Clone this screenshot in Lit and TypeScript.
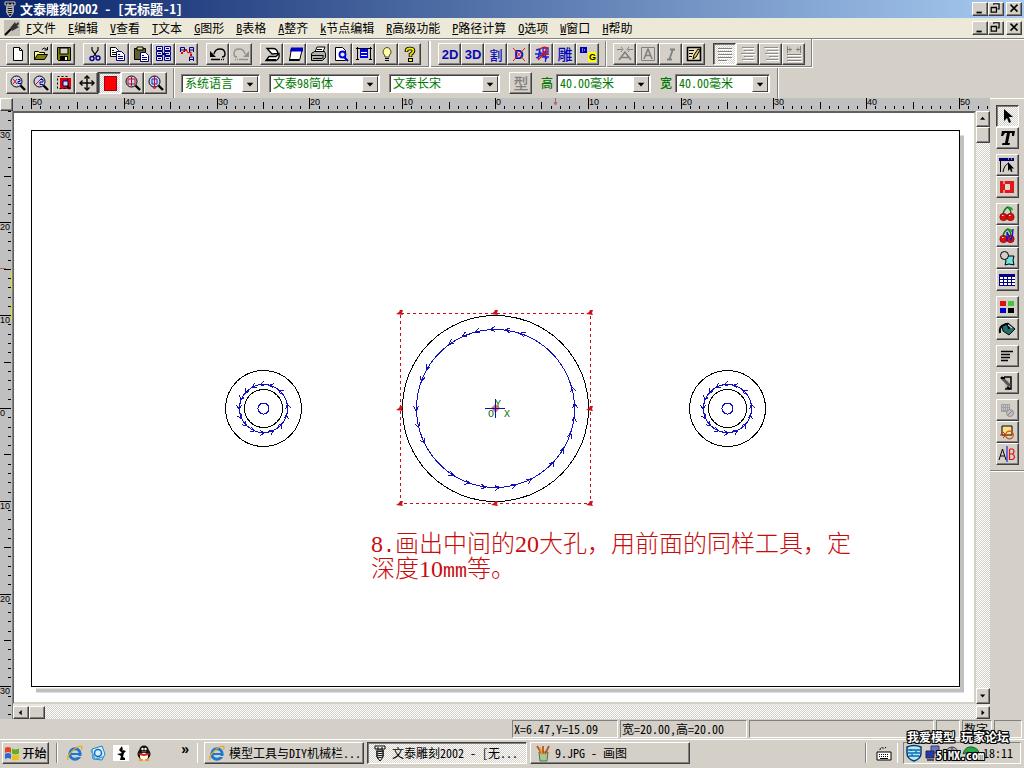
import { LitElement, html, svg, css, TemplateResult, SVGTemplateResult } from "lit";
import { customElement, property, state } from "lit/decorators.js";
import { classMap } from "lit/directives/class-map.js";

const doc = (x: number, y: number, c = "#000080") => svg`
  <path d="M${x}.5 ${y}.5h5l3 3v6h-8z" fill="#fff" stroke=${c} />
  <path d="M${x + 2} ${y + 3}.5h2M${x + 2} ${y + 5}.5h5M${x + 2} ${y + 7}.5h5" stroke=${c} />`;

const lens = (inner: SVGTemplateResult) => svg`
  <circle cx="6.5" cy="6.5" r="5.5" fill="#c8d8e8" stroke="#000" />
  <path d="M10.5 10.5l4.5 4.5" stroke="#000" stroke-width="2.4" />${inner}`;

const lines = (rows: number[][], c: string) =>
  rows.map(([x, y, w]) => svg`<rect x=${x} y=${y} width=${w} height="1" fill=${c} /><rect x=${x + 1} y=${y + 1} width=${w} height="1" fill="#fff" />`);

const glyph = (t: string, c: string, size = 15) =>
  svg`<text x="8" y="14" text-anchor="middle" font-size=${size} font-weight="500" fill=${c}>${t}</text>`;
const latin = (t: string, c: string) =>
  svg`<text class="latin" x="8" y="13" text-anchor="middle" font-size="13" font-weight="700" fill=${c}>${t}</text>`;

const cherries = svg`
  <path d="M4 8Q5 3 9 1Q12 4 12 8" fill="none" stroke="#087808" stroke-width="1.5" />
  <path d="M9 1q4-1 5 3q-3 1-5-3z" fill="#20a030" />
  <circle cx="4.5" cy="11" r="3.7" fill="#d81010" stroke="#700" stroke-width=".6" />
  <circle cx="11.5" cy="11" r="3.7" fill="#d81010" stroke="#700" stroke-width=".6" />
  <path d="M3 9.5h1.5M10 9.5h1.5" stroke="#fff" />`;

const ie = svg`
  <circle cx="8" cy="9" r="5.2" fill="none" stroke="#1c78d0" stroke-width="3" />
  <path d="M4 9h9" stroke="#1c78d0" stroke-width="2" />
  <path d="M10 11h5v1h-5z" fill="#d4d0c8" />
  <path d="M1 15C-1 11 7 3 12 1.5c3-1 3.500 1 2.500 3" fill="none" stroke="#e8a818" stroke-width="1.300" />`;

const screw = (a: string, b: string) => svg`
  <path d="M3 1h10v3H3zM5 5h6v7l-3 4-3-4z" fill=${a} stroke=${b} />
  <path d="M6 2v2M10 2v2M4 7l8-1M4 9l8-1M4 11l8-1M5 13l6-1" stroke=${b} fill="none" />`;

const icons: Record<string, unknown> = {
  new: svg`<path d="M3.5 1.500h6l3 3v10h-9z" fill="#fff" stroke="#000" /><path d="M9.500 1.500v3h3" fill="none" stroke="#000" />`,
  open: svg`<path d="M1.500 13.500v-8h4l1 1h5v3" fill="#ffff80" stroke="#000" /><path d="M1.500 13.500l3-5h10l-3 5z" fill="#808000" stroke="#000" /><path d="M9 3.500q2-3 5 0M14.500 1v3h-3" fill="none" stroke="#000" />`,
  save: svg`<path d="M1.500 1.500h13v13h-12l-1-1z" fill="#808000" stroke="#000" /><path d="M4 2h8v6H4z" fill="#d4d0c8" stroke="#000" /><path d="M4 10h8v5H4z" fill="#000" /><path d="M9 11h2v3H9z" fill="#fff" />`,
  cut: svg`<path d="M5 1v3l5 7M11 1v3l-5 7" fill="none" stroke="#000" stroke-width="1.200" /><circle cx="5" cy="12.500" r="2" fill="none" stroke="#000090" stroke-width="1.400" /><circle cx="11" cy="12" r="2" fill="none" stroke="#000090" stroke-width="1.400" />`,
  copy: svg`${doc(0, 1, "#000")}${doc(6, 5)}`,
  paste: svg`<path d="M1.500 2.500h11v11h-11z" fill="#606030" stroke="#000" /><path d="M4 1h6v3H4z" fill="#d8d890" stroke="#000" />${doc(7, 6)}`,
  grid: svg`${[0, 8].map((x) => [0, 5, 10].map((y) => svg`<path d="M${x}.5 ${y}.5h6v4h-6z" fill="#dfe4ff" stroke="#000080" /><path d="M${x + 2} ${y + 2}.5h3" stroke="#000080" />`))}<path d="M6 8h4" stroke="#000080" stroke-width="2" />`,
  nodes: svg`<path d="M1.500 6V1.500h4V6M1 4h5M10.500 6V1.500h4V6M10 4h5M10.500 15v-4h4v4M10 13.500h5" fill="none" stroke="#000090" /><path d="M3 7l4-4 2 4 3-1v4" fill="none" stroke="#e00000" /><path d="M2 6h2v2H2zM6 3h2v2H6zM11 8h2v2h-2z" fill="#e00000" />`,
  undo: svg`<path d="M4 8q1-5 6-5t5 5q0 3-3 3" fill="none" stroke="#000" stroke-width="1.400" /><path d="M0 5v6h6z" fill="#000" /><path d="M1 13.500h9M11 13.500h1M13 13.500h1" stroke="#000" stroke-width="1.500" />`,
  redo: svg`<path d="M12 8q-1-5-6-5t-5 5q0 3 3 3" fill="none" stroke="#909090" stroke-width="1.400" /><path d="M16 5v6h-6z" fill="#909090" /><path d="M6 13.500h9M4 13.500h1M2 13.500h1" stroke="#909090" stroke-width="1.500" />`,
  plot: svg`<path d="M3 2.500h6q4 0 5 5l-6 .5zM2 14.500l3-4h7l3-3q1 5-3 7z" fill="#fff" stroke="#000" stroke-width="1.300" /><path d="M2 14h10" stroke="#000" stroke-width="2" />`,
  sheet: svg`<path d="M4.500 2.500h11l-3 12h-10z" fill="#fff" stroke="#000" /><path d="M4 1.500h12v4H3z" fill="#0000c0" /><path d="M2 14h10" stroke="#000" stroke-width="2" />`,
  print: svg`<path d="M5 6l2-5h8l-2 5" fill="#fff" stroke="#000" /><path d="M1.500 7.500l3-2h10l1 2v4l-3 3h-11z" fill="#b0b0a8" stroke="#000" /><path d="M1 9.500h12M3 12.500h9M7 3.500h5M13 9v4" stroke="#000" />`,
  preview: svg`<path d="M2.500 1.500h7l3 3v10h-10z" fill="#fff" stroke="#000" /><circle cx="9.500" cy="8.500" r="3" fill="#e0e8ff" stroke="#0000d0" stroke-width="1.800" /><path d="M11 11l4 4" stroke="#0000d0" stroke-width="2" />`,
  frame: svg`<path d="M0 2.500h16M1.500 1v13M14.500 1v13M0 13.500h3M13 13.500h3" stroke="#000" /><path d="M4 3h8v9H4z" fill="#0000e0" /><path d="M5 6.500h6M5 9.500h6" stroke="#fff" />`,
  bulb: svg`<path d="M6 11q0-2-2-4 0-5 4-5.500 4 .5 4 5.500-2 2-2 4z" fill="#ffffa0" stroke="#444" /><path d="M6 12.500h4M6 14.500h4" stroke="#000" /><path d="M1 2l2 1M15 2l-2 1" stroke="#e0e000" />`,
  help: svg`<path d="M4.500 6V4.500q0-2 3.500-2t3.500 2-3 4V11" fill="none" stroke="#000" stroke-width="3.600" /><path d="M4.500 5.500V4.500q0-2 3.500-2t3.500 2-3 4V10.500" fill="none" stroke="#f0e800" stroke-width="1.800" /><rect x="6.500" y="12.500" width="4" height="3" fill="#f0e800" stroke="#000" />`,
  "2d": latin("2D", "#0808b8"),
  "3d": latin("3D", "#0808b8"),
  split: glyph("割", "#0808b8", 13),
  dx: svg`${latin("D", "#0808b8")}<path d="M2 2l12 13M14 2L2 15" stroke="#e02020" />`,
  weld: svg`<path d="M2 4l4-1-2 10M1 8h6M2 12l6-3M9 2h5v4H9zM8 8h7M8 11h7M11.500 7v9M5 5l8 8" fill="none" stroke="#2020d0" stroke-width="1.300" /><path d="M6 3q4-3 7-1-1 4-5 6M4 14l5-5 5-1" fill="none" stroke="#e01010" stroke-width="1.300" />`,
  carve: glyph("雕", "#0808b8"),
  bg: svg`<rect x="8" y="6" width="8" height="10" fill="#ffff00" /><path d="M0 1h7v6H0z" fill="#0000b0" /><path d="M2 3h1M4 4h1M2 5h1" stroke="#fff" /><text class="latin" x="9" y="14" font-size="9" font-weight="700">G</text>`,
  spread: svg`<path d="M2 14L8 6l6 8M4 11.500h8" fill="none" stroke="#808080" stroke-width="1.600" /><path d="M0 3.500h5M11 3.500h5M4 1l2 2.500L4 6M12 1l-2 2.500L12 6" fill="none" stroke="#808080" />`,
  boxa: svg`<path d="M1.500 1.500h13v13h-13z" fill="none" stroke="#808080" /><path d="M4 13L8 3l4 10M5.500 9.500h5" fill="none" stroke="#808080" stroke-width="1.600" />`,
  italic: svg`<path d="M7 3.500h5M4 13.500h5M10 3L6.500 13" fill="none" stroke="#808080" stroke-width="1.800" />`,
  edit: svg`<path d="M1.500 1.500h13v13h-13z" fill="#e8e0c0" stroke="#000" stroke-width="1.600" /><path d="M3 4.500h5M3 7.500h4M3 10.500h3" stroke="#000" /><path d="M7 13l1-4 4-6 2 1-4 7z" fill="#e8c858" stroke="#000" />`,
  left: svg`${lines([[1, 2, 14], [1, 5, 14], [1, 8, 14], [1, 11, 14], [1, 14, 9]], "#808080")}`,
  center: svg`${lines([[2, 1, 12], [4, 4, 9], [1, 7, 14], [4, 10, 9], [2, 13, 12]], "#909090")}`,
  right: svg`${lines([[1, 1, 14], [4, 4, 11], [2, 7, 13], [6, 10, 9], [3, 13, 12]], "#909090")}`,
  justify: svg`<path d="M1.500 0v7M14.500 0v7M2 3.500h4M10 3.500h4M4 1.500v4M12 1.500v4" stroke="#808080" />${lines([[1, 8, 14], [1, 11, 14], [1, 14, 14]], "#808080")}`,
  zoomx: lens(svg`<path d="M3 4l4 5M7 4L3 9" stroke="#e00000" /><path d="M8 4.500h2v2H8v2h3" fill="none" stroke="#0000c0" />`),
  zoomp: lens(svg`<path d="M2 10L9 3" stroke="#e00000" /><path d="M7 4.500h3v2.500H7V9.500h3" fill="none" stroke="#0000c0" />`),
  zoombox: svg`<path d="M4 3h11v11H4z" fill="#e00000" /><path d="M1.500 1.500h10v12h-10z" fill="none" stroke="#000" stroke-dasharray="2 2" /><path d="M7 6h5v5H7z" fill="#c8e0ff" stroke="#000080" /><path d="M11 11l3 3" stroke="#000" stroke-width="2" />`,
  move: svg`<path d="M8 1v14M1 8h14" stroke="#000" stroke-width="1.400" /><path d="M5.500 3.500L8 1l2.500 2.500M5.500 12.500L8 15l2.500-2.500M3.500 5.500L1 8l2.500 2.500M12.500 5.500L15 8l-2.500 2.500" fill="none" stroke="#000" stroke-width="1.400" />`,
  stop: svg`<rect x="2.500" y="1.500" width="12" height="14" fill="#f00" stroke="#a00020" />`,
  zoomall: lens(svg`<path d="M3 4h7v5H3zM6.500 2v9" fill="none" stroke="#d00030" />`),
  zoomone: lens(svg`<path d="M4 4h5v5H4z" fill="none" stroke="#2020e0" /><path d="M6.500 1v11M4 11l2.500 3L9 11" fill="none" stroke="#d00030" />`),
  type: glyph("型", "#808080"),
  arrow: svg`<path d="M5 1v12l3-3 2 5 2-1-2-5h4z" fill="#000" />`,
  text: svg`<path d="M3 1h13l-1 5h-2l0-3h-2L9 13h2l-.5 2H3l.5-2H6L8 3H6L4 6H2z" fill="#000" />`,
  node: svg`<path d="M0 1h15v3H0z" fill="#000070" /><path d="M12 2h1M9 2h1" stroke="#fff" /><path d="M1.500 4v11M4 15q1-7 6-9" fill="none" stroke="#000" /><path d="M9 5v9l2-2 1 3 1.500-.5-1-3H15z" fill="#000" />`,
  shape: svg`<path d="M1 2h14v12H1z" fill="#e01818" /><path d="M6 5h5v6H6z" fill="#e4d8d0" /><path d="M5 2v3M5 11v3" stroke="#fff" />`,
  cherry: cherries,
  cherryn: svg`${cherries}<path d="M8 13V4l4 8q2-5 2-11" fill="none" stroke="#1010d0" stroke-width="1.300" />`,
  merge: svg`<path d="M5 6h10l-1 4 1 5-5-1-4 1 1-4z" fill="#70e0e0" stroke="#000" /><circle cx="5.500" cy="5.500" r="4" fill="#d4d0c8" stroke="#000" />`,
  table: svg`<path d="M0 2h16v12H0z" fill="#000080" />${[0, 1, 2].map((r) => [0, 1, 2, 3].map((c) => svg`<rect x=${1 + c * 4} y=${5 + r * 3} width="3" height="2" fill="#fff" />`))}`,
  colors: svg`<rect x="1" y="2" width="6" height="5" fill="#e01010" /><rect x="9" y="2" width="6" height="5" fill="#40c840" /><rect x="1" y="9" width="6" height="5" fill="#0000c8" /><rect x="9" y="9" width="6" height="5" fill="#000" />`,
  bucket: svg`<path d="M3 5l6-3 7 6-6 6-6-4z" fill="#207070" stroke="#000" /><path d="M1 12q-1-7 4-8 4-3 5 4" fill="none" stroke="#000" stroke-width="2" /><path d="M9 4l4 3" stroke="#fff" />`,
  para: svg`<path d="M2 3.500h12M2 6.500h9M2 9.500h9M2 12.500h7" stroke="#000" stroke-width="1.600" />`,
  tool: svg`<path d="M5 2h7v12H6" fill="#c0c0b8" stroke="#000" stroke-width="1.500" /><path d="M2 2l9 9" stroke="#555" stroke-width="3" /><path d="M2 3h4M8 12l3 2" stroke="#000" stroke-width="2" />`,
  fade: svg`<rect x="2" y="2" width="9" height="8" fill="#a0a0a0" /><path d="M3 4h7M3 7h7" stroke="#eee" stroke-dasharray="1 1" /><circle cx="11" cy="11" r="3.500" fill="#c0c0c0" stroke="#909090" /><path d="M9 13l4-4" stroke="#808080" />`,
  clip: svg`<path d="M3 2h10v9H3z" fill="#f8e088" stroke="#000" /><circle cx="10.500" cy="11" r="3.800" fill="none" stroke="#e05010" stroke-width="1.300" /><path d="M1 11h6M4 8l3 3-3 3" fill="none" stroke="#c03010" />`,
  ab: svg`<path d="M0 14L3.500 3 7 14M1.500 10h4" fill="none" stroke="#000" /><path d="M8 0v16" stroke="#0000e0" /><path d="M10.500 3v10.500h3q2-.5 2-2.500t-2-3h-3M10.500 3h3q1.500.5 1.500 2.500t-1.500 2.500" fill="none" stroke="#e01010" stroke-width="1.200" />`,
  screwl: screw("#000", "#d0d0d0"),
  screwd: screw("#fff", "#000"),
  plug: svg`<rect width="16" height="16" fill="#c4c0b8" /><path d="M1 15l6-6" stroke="#000" stroke-width="2" /><path d="M6 8l5-6 1 2 2-2 1 2-2 2 2 1-7 4z" fill="#333" />`,
  min: svg`<path d="M4 12h6" stroke="#000" stroke-width="2" />`,
  restore: svg`<path d="M5.500 3v-1h6v6h-2M5 2h7M2.500 6.500h6v5h-6zM2 6h7" fill="none" stroke="#000" stroke-width="1.400" />`,
  close: svg`<path d="M4 3l8 8M12 3l-8 8" stroke="#000" stroke-width="1.700" />`,
  ie,
  outlook: svg`<path d="M2 4l10-3 3 8-3 6-9-1z" fill="#d8f0ff" stroke="#2080c0" /><circle cx="8" cy="8" r="3.500" fill="none" stroke="#1868b8" stroke-width="1.500" /><path d="M1 5l4 9 8-2" fill="none" stroke="#50a8d8" stroke-width="1.500" />`,
  desk: svg`<rect width="16" height="16" fill="#fff" /><path d="M9 1l-3 4 3 3-5 1 4 2-1 4h5v-2l-2-1 1-4 2-2-3-1z" fill="#000" /><path d="M9 4l1 2" stroke="#d04000" />`,
  qq: svg`<ellipse cx="8" cy="9" rx="6.500" ry="6" fill="#111" /><circle cx="8" cy="5" r="4.600" fill="#111" /><ellipse cx="8" cy="11.500" rx="4" ry="3.500" fill="#fff" /><circle cx="6.500" cy="4" r="1.200" fill="#fff" /><circle cx="9.500" cy="4" r="1.200" fill="#fff" /><path d="M5 6.500h6l-3 1z" fill="#f0a000" /><path d="M3 8.500q5 3 10 0" fill="none" stroke="#e02020" stroke-width="2" /><path d="M3 15h4M9 15h4" stroke="#f0a000" stroke-width="2" />`,
  start: svg`<path d="M1 3q3-2 6 0v5q-3-2-6 0z" fill="#e04818" /><path d="M8 3.500q3 2 7 0v5q-4 2-7 0z" fill="#60b020" /><path d="M1 9q3-2 6 0v5q-3-2-6 0z" fill="#2868d8" /><path d="M8 9.500q3 2 7 0v5q-4 2-7 0z" fill="#f0c010" />`,
  paint: svg`<path d="M4 7h9l-1 9H5z" fill="#a8c890" stroke="#507050" /><path d="M2 1l5 8M8 1v8M14 1l-4 8" fill="none" stroke="#c05020" stroke-width="1.800" /><path d="M5 2l2 7" stroke="#d8b020" stroke-width="1.500" />`,
  keyboard: svg`<path d="M1 7h14v8H1z" fill="#fff" stroke="#000" /><path d="M3 9.500h10M3 11.500h10" stroke="#000" stroke-dasharray="1 1" /><path d="M4 13.500h8" stroke="#000" /><path d="M4 5q0-3 3-2t3-2" fill="none" stroke="#000" stroke-dasharray="2 1" />`,
  shield: svg`<path d="M1 2q7-3 14 0v6q0 6-7 8-7-2-7-8z" fill="#b8e8f8" stroke="#003c70" stroke-width="1.500" /><path d="M2 5h12M2 8h12M3 11h10M5 4v2M10 6v2M6 9v2" stroke="#0868b0" stroke-width="1.300" />`,
  net: svg`<path d="M6 1h8v7H6z" fill="#6878c8" stroke="#303868" /><path d="M1 6h8v7H1z" fill="#2838a8" stroke="#202850" /><path d="M2 15h7" stroke="#555" stroke-width="2" />`,
  sound: svg`<circle cx="8" cy="8" r="6" fill="#a8a8b8" stroke="#404058" /><path d="M8 2v12" stroke="#404058" />`,
  umbrella: svg`<path d="M0 9q2-8 9-7 6 1 7 6-4-2-7 0-4-2-9 1z" fill="#28a848" stroke="#086020" /><path d="M9 8v7" stroke="#111" />`,
  up: svg`<path d="M4 9h7L7.500 5z" />`,
  down: svg`<path d="M4 6h7L7.500 10z" />`,
  back: svg`<path d="M9 4v7L5 7.500z" />`,
  fwd: svg`<path d="M6 4v7l4-3.500z" />`,
};

@customElement("ui-icon")
export class UiIcon extends LitElement {
  @property() name = "new";
  @property({ type: Number }) size = 16;
  static styles = css`
    :host { display: inline-flex; flex: none; }
    svg { display: block; fill: #000; overflow: visible; }
    text { font-family: "Liberation Sans", "Noto Sans CJK SC", sans-serif; }
    .latin { font-family: "Liberation Sans", sans-serif; }
  `;
  render() {
    return html`<svg width=${this.size} height=${this.size} viewBox="0 0 16 16" aria-hidden="true">${icons[this.name]}</svg>`;
  }
}

type Tool = [string, string];

const fileTools: Tool[][] = [
  [["new", "新建"], ["open", "打开"], ["save", "保存"]],
  [["cut", "剪切"], ["copy", "复制"], ["paste", "粘贴"], ["grid", "阵列"], ["nodes", "节点"]],
  [["undo", "撤消"], ["redo", "重做"]],
  [["plot", "输出"], ["sheet", "页面"], ["print", "打印"], ["preview", "预览"], ["frame", "版面"], ["bulb", "提示"], ["help", "帮助"]],
];
const pathTools: Tool[][] = [
  [["2d", "二维"], ["3d", "三维"], ["split", "割"], ["dx", "删除路径"], ["weld", "焊"], ["carve", "雕"], ["bg", "图形"]],
];
const textTools: Tool[][] = [
  [["spread", "字距"], ["boxa", "字框"], ["italic", "斜体"], ["edit", "编辑文本"]],
  [["left", "左对齐"], ["center", "居中"], ["right", "右对齐"], ["justify", "分散对齐"]],
];
const viewTools: Tool[][] = [
  [["zoomx", "放大"], ["zoomp", "缩小"], ["zoombox", "窗口缩放"], ["move", "平移"], ["stop", "填充"], ["zoomall", "全部"], ["zoomone", "选中"]],
];
const sideTools: Tool[][] = [
  [["arrow", "选择"], ["text", "文本"]],
  [["node", "节点编辑"], ["shape", "图形"]],
  [["cherry", "图库"], ["cherryn", "曲线"], ["merge", "合并"], ["table", "表格"]],
  [["colors", "颜色"], ["bucket", "填充"]],
  [["para", "段落"]],
  [["tool", "刀具"]],
  [["fade", "透明"], ["clip", "剪裁"], ["ab", "对照"]],
];
const menus = ["F文件", "E编辑", "V查看", "T文本", "G图形", "B表格", "A整齐", "k节点编辑", "R高级功能", "P路径计算", "O选项", "W窗口", "H帮助"];
const bigMarks = [83, 72, 94, 105, 115, 126, 151, 160, 182, 194, 206, 238, 251, 263, 273, 285, 297, 318, 330, 342, 354, 4, 16];
const smallMarks = [75, 50, 98, 118, 140, 160, 182, 205, 225, 248, 272, 295, 320, 345, 10];

/** Distance in pixels between two ten-millimetre marks of the rulers. */
const STEP = 92.8;

@customElement("app-root")
export class AppRoot extends LitElement {
  @state() private align = "left";
  @state() private mode = "arrow";

  static styles = css`
    :host {
      display: flex; flex-direction: column; position: relative;
      height: 100vh; min-height: 560px; overflow: hidden;
      background: #d4d0c8; color: #000;
      font: 12px/16px "Noto Sans CJK SC", sans-serif;
      font-feature-settings: "hwid";
    }
    * { box-sizing: border-box; }
    button, select {
      font: inherit; font-feature-settings: inherit; color: inherit;
      margin: 0; padding: 0; border-radius: 0;
    }
    button {
      display: flex; align-items: center; justify-content: center; flex: none;
      background: #d4d0c8; border: 1px solid; border-color: #fff #404040 #404040 #fff;
      box-shadow: inset -1px -1px #808080;
    }
    .pressed {
      border-color: #404040 #fff #fff #404040; box-shadow: inset 1px 1px #808080;
      background: repeating-conic-gradient(#fff 0 25%, #d4d0c8 0 50%) 0 0 / 2px 2px;
    }
    .title {
      display: flex; align-items: center; height: 18px; padding: 0 2px;
      background: linear-gradient(90deg, #0a246a, #a6caf0);
      color: #fff; font-size: 13px; font-weight: 700; gap: 2px; flex: none;
    }
    .title h1 { font: inherit; margin: 0; flex: 1; white-space: pre; }
    .winbtns { display: flex; }
    .winbtns button { width: 16px; height: 14px; }
    .winbtns button:last-child { margin-left: 2px; }
    .menubar {
      display: flex; align-items: center; height: 20px; padding: 0 2px 0 4px; flex: none;
      background: #ece9d8;
    }
    .menus { display: flex; flex: 1; margin-left: 6px; gap: 12px; }
    .menus button { background: none; border: 0; box-shadow: none; white-space: nowrap; }
    .bar { display: flex; flex: none; height: 30px; }
    .bar.first { border-top: 1px solid #808080; box-shadow: inset 0 1px #fff; }
    .strip {
      display: flex; align-items: center; padding: 2px 7px 0 6px;
      border-right: 1px solid #fff; box-shadow: inset -1px 0 #808080;
    }
    .bar.first .strip { border-bottom: 1px solid #fff; box-shadow: inset -1px -1px #808080, inset 0 1px #fff; }
    .bar.second .strip { padding: 0 8px 0 6px; }
    .band, .group { display: flex; align-items: center; }
    .band { gap: 8px; }
    .group button, .single { width: 23px; height: 22px; }
    .sep { width: 2px; margin: 0 6px; align-self: stretch; border-left: 1px solid #808080; background: #fff; }
    .sep.wide { width: 3px; margin: 0 7px; border-right: 1px solid #fff; }
    .fields { display: flex; align-items: center; gap: 9px; color: #007800; }
    .combo {
      display: flex; position: relative; height: 19px; width: 111px; background: #fff;
      border: 1px solid; border-color: #808080 #fff #fff #808080; box-shadow: inset 1px 1px #404040;
    }
    .combo.lang { width: 79px; }
    .combo.num { width: 95px; }
    .combo select { appearance: none; border: 0; background: transparent; flex: 1; min-width: 0; padding: 0 18px 2px 3px; outline: 0; }
    .combo i {
      position: absolute; right: 1px; top: 1px; bottom: 0; width: 16px; pointer-events: none;
      display: flex; background: #d4d0c8; border: 1px solid; border-color: #fff #404040 #404040 #fff;
    }
    .field { display: flex; align-items: center; gap: 3px; }
    .field label { font-weight: 500; }
    .work { display: flex; flex: 1; min-height: 0; }
    .editor {
      flex: 1; min-width: 0; display: grid;
      grid-template: 13px minmax(0, 1fr) 15px / 13px minmax(0, 1fr) 14px;
    }
    .hruler { grid-column: 2 / 4; background: #c0c0c0; overflow: hidden; }
    .vruler { grid-row: 2 / 4; background: #c0c0c0; overflow: hidden; border-right: 1px solid #808080; }
    .hruler svg, .vruler svg { display: block; width: 100%; height: 100%; overflow: visible; }
    .rule { font: 9px "Liberation Sans", sans-serif; }
    .canvas { position: relative; overflow: hidden; background: #fff; border: 2px solid; border-color: #606060 #d4d0c8 #d4d0c8 #606060; border-left-width: 1px; }
    .canvas svg { display: block; width: 100%; height: 100%; }
    .axis { font: 10px "Liberation Mono", monospace; fill: #007000; }
    .note {
      position: absolute; left: 357px; top: 419px; width: 490px; margin: 0;
      font-family: "Liberation Serif", "Noto Sans CJK SC", serif; font-feature-settings: normal;
      font-size: 24px; line-height: 24px; font-weight: 300; color: #c80c0c;
    }
    .note span { font-family: "Liberation Mono", monospace; font-size: 20px; line-height: 20px; }
    .track { display: flex; background: repeating-conic-gradient(#fff 0 25%, #d4d0c8 0 50%) 0 0 / 2px 2px; }
    .track button { width: 14px; height: 16px; }
    .vtrack { flex-direction: column; }
    .vtrack button:last-child { margin-top: auto; }
    .htrack { grid-column: 2 / 4; border-top: 2px solid #e8e6e0; }
    .htrack button { width: 16px; height: 13px; }
    .htrack button:last-child { margin-left: auto; width: 14px; }
    .tools {
      display: flex; flex-direction: column; align-self: flex-start; gap: 5px; width: 34px; padding: 6px 5px 5px;
      border-top: 1px solid #fff; border-bottom: 1px solid #808080; box-shadow: 0 1px #fff;
    }
    .tools .group { flex-direction: column; }
    .status { display: flex; gap: 2px; height: 20px; flex: none; padding: 1px 2px 1px 512px; }
    .status span {
      border: 1px solid; border-color: #808080 #fff #fff #808080; padding: 0 1px; white-space: nowrap; line-height: 16px;
    }
    .w1 { width: 106px; } .w2 { width: 127px; } .w3 { flex: 1; } .w4 { width: 24px; } .w5 { width: 30px; } .w6 { width: 28px; }
    .taskbar {
      display: flex; align-items: center; height: 29px; flex: none; padding: 0 3px 2px 2px;
      border-top: 1px solid #fff;
    }
    .taskbar > button { height: 22px; }
    .start { width: 47px; gap: 2px; font-weight: 500; }
    .quick { display: flex; align-items: center; gap: 7px; width: 141px; margin: 0 6px 0 8px; padding-left: 9px; height: 20px; border: solid #fff; border-width: 0 1px 0 1px; box-shadow: -1px 0 #808080; }
    .quick a { display: flex; color: inherit; text-decoration: none; }
    .quick .more { margin-left: auto; padding-right: 8px; align-self: flex-start; font-weight: 700; font-size: 14px; line-height: 12px; font-family: "Liberation Sans", sans-serif; }
    .task { width: 160px; margin-right: 3px; gap: 4px; padding-left: 4px; white-space: pre; }
    .taskbar > .task { justify-content: flex-start; }
    .kbd { margin-left: auto; padding: 0 5px 0 9px; border: solid #fff; border-width: 0 1px; display: flex; height: 20px; align-items: center; box-shadow: -1px 0 #808080; }
    .tray {
      display: flex; align-items: center; gap: 3px; width: 118px; height: 22px; margin-left: 5px; padding: 0 7px 0 2px;
      border: 1px solid; border-color: #808080 #fff #fff #808080;
    }
    .tray time { margin-left: auto; }
    .mark {
      position: absolute; right: 14px; bottom: 4px; width: 104px; text-align: center; pointer-events: none;
      color: #fff; font-weight: 700; line-height: 18px; white-space: nowrap;
      text-shadow: 1px 0 #000, -1px 0 #000, 0 1px #000, 0 -1px #000, 1px 1px #000, -1px -1px #000, 1px -1px #000, -1px 1px #000;
    }
    .mark div + div { padding-left: 4px; }
  `;

  private isPressed(id: string) {
    return id === this.align || id === this.mode || id === "stop";
  }

  private pick(id: string) {
    if (textTools[1].some(([n]) => n === id)) this.align = id;
    if (sideTools.some((g) => g.some(([n]) => n === id))) this.mode = id;
  }

  private groups(list: Tool[][]): TemplateResult[] {
    return list.map((g) => html`<div class="group">${g.map(([id, label]) => html`
      <button class=${classMap({ pressed: this.isPressed(id) })} aria-label=${label} @click=${() => this.pick(id)}>
        <ui-icon name=${id}></ui-icon>
      </button>`)}</div>`);
  }

  private combo(id: string, label: string, value: string, kind = "") {
    return html`<div class="combo ${kind}">
      <select id=${id} aria-label=${label}><option>${value}</option></select>
      <i><ui-icon name="down" size="15"></ui-icon></i>
    </div>`;
  }

  private windowButtons() {
    return html`<div class="winbtns">
      <button aria-label="最小化"><ui-icon name="min" size="14"></ui-icon></button>
      <button aria-label="还原"><ui-icon name="restore" size="14"></ui-icon></button>
      <button aria-label="关闭"><ui-icon name="close" size="14"></ui-icon></button>
    </div>`;
  }

  private hRuler() {
    const ticks: SVGTemplateResult[] = [];
    for (let i = -51; i <= 53; i++) {
      const x = Math.round(482 + (i * STEP) / 10);
      const h = i % 10 === 0 ? 11 : i % 5 === 0 ? 7 : 3;
      ticks.push(svg`<rect x=${x} y=${11 - h} width="1" height=${h} />`);
      if (i % 10 === 0) ticks.push(svg`<text class="rule" x=${x + 1} y="7">${Math.abs(i)}</text>`);
    }
    return html`<svg aria-hidden="true">${ticks}<path d="M542.500 0v6M541 4l1.500 3L544 4" fill="none" stroke="#b06060" /></svg>`;
  }

  private vRuler() {
    const ticks: SVGTemplateResult[] = [];
    for (let i = -32; i <= 33; i++) {
      const y = Math.round(297 + (i * STEP) / 10);
      const w = i % 10 === 0 ? 11 : i % 5 === 0 ? 7 : 3;
      ticks.push(svg`<rect x=${11 - w} y=${y} width=${w} height="1" />`);
      if (i % 10 === 0) ticks.push(svg`<text class="rule" x="0" y=${y + 8}>${Math.abs(i)}</text>`);
    }
    return html`<svg aria-hidden="true">${ticks}
      <path d="M0 157.500h6" stroke="#b06060" /><path d="M11.500 160v20M11.500 192v18" stroke="#d8e020" /></svg>`;
  }

  private marks(cx: number, cy: number, r: number, angles: number[], len: number) {
    return angles.map((a) => {
      const t = (a * Math.PI) / 180;
      const x = cx + r * Math.cos(t);
      const y = cy - r * Math.sin(t);
      return svg`<path d="M${len} -3L0 0L${len} 2" transform="translate(${x} ${y}) rotate(${90 - a})" />`;
    });
  }

  private drawing() {
    const small = (cx: number) => svg`
      <g stroke="#000"><circle cx=${cx} cy="408.500" r="38" /><circle cx=${cx} cy="408.500" r="19" /></g>
      <g stroke="#1010b8"><circle cx=${cx} cy="408.500" r="24" /><circle cx=${cx} cy="408.500" r="5.500" />
        ${this.marks(cx, 408.5, 24, smallMarks, 4)}</g>`;
    return html`<svg role="img" aria-label="雕刻图形">
      <g transform="translate(-14 -113)" fill="none">
        <path d="M36 688.500h924v-553h4v557H36z" fill="#c0c0c0" />
        <rect x="31.500" y="130.500" width="928" height="556" fill="#fff" stroke="#000" />
        <g shape-rendering="crispEdges">
          ${small(263.5)}${small(727.5)}
          <circle cx="495.500" cy="408.500" r="93" stroke="#000" />
          <g stroke="#1010b8"><circle cx="495.500" cy="408.500" r="79" />${this.marks(495.5, 408.5, 79, bigMarks, 5)}</g>
          <rect x="400.500" y="313.500" width="190" height="190" stroke="#c80c20" stroke-dasharray="3 3" />
        </g>
        ${[400, 495, 590].map((x) => [312, 408, 503].map((y) => x === 495 && y === 408 ? "" : svg`<path d="M${x - 4} ${y + 2}l3-2 1-2h3l-1 3 1 2z" fill="#d01018" />`))}
        <path d="M491 408l4.500-4 4.500 4-4.500 5z" fill="#d03050" opacity=".7" />
        <path d="M485 408.500h20M495.500 399v19" stroke="#1010a0" />
        <text class="axis" x="488" y="417">O</text><text class="axis" x="504" y="417">X</text><text class="axis" x="495" y="407">Y</text>
      </g>
    </svg>`;
  }

  render() {
    return html`
      <header class="title"><ui-icon name="screwl"></ui-icon><h1>文泰雕刻2002 - [无标题-1]</h1>${this.windowButtons()}</header>
      <nav class="menubar"><ui-icon name="plug"></ui-icon>
        <div class="menus">${menus.map((m) => html`<button><u>${m[0]}</u>${m.slice(1)}</button>`)}</div>${this.windowButtons()}
      </nav>
      <div class="bar first"><div class="strip">
        <div class="band">${this.groups(fileTools)}</div><div class="sep wide"></div>
        <div class="band">${this.groups(pathTools)}</div><div class="sep"></div>
        <div class="band">${this.groups(textTools)}</div>
      </div></div>
      <div class="bar second"><div class="strip">
        ${this.groups(viewTools)}<div class="sep"></div>
        <div class="fields">
          ${this.combo("lang", "语言", "系统语言", "lang")}
          ${this.combo("font1", "中文字体", "文泰98简体")}
          ${this.combo("font2", "字体", "文泰长宋")}
          <button class="single" aria-label="型"><ui-icon name="type"></ui-icon></button>
          <div class="field"><label for="high">高</label>${this.combo("high", "高", "40.00毫米", "num")}</div>
          <div class="field"><label for="wide">宽</label>${this.combo("wide", "宽", "40.00毫米", "num")}</div>
        </div>
      </div></div>
      <div class="work">
        <main class="editor">
          <button aria-label="原点"></button>
          <div class="hruler">${this.hRuler()}</div>
          <div class="vruler">${this.vRuler()}</div>
          <div class="canvas">${this.drawing()}
            <p class="note">8<span>.</span>画出中间的20大孔，用前面的同样工具，定深度10<span>mm</span>等。</p>
          </div>
          <div class="track vtrack">
            <button aria-label="向上"><ui-icon name="up" size="12"></ui-icon></button><button aria-label="垂直滑块"></button>
            <button aria-label="向下"><ui-icon name="down" size="12"></ui-icon></button>
          </div>
          <div class="track htrack">
            <button aria-label="向左"><ui-icon name="back" size="12"></ui-icon></button><button aria-label="水平滑块"></button>
            <button aria-label="向右"><ui-icon name="fwd" size="12"></ui-icon></button>
          </div>
        </main>
        <aside class="tools">${this.groups(sideTools)}</aside>
      </div>
      <div class="status">
        <span class="w1">X=6.47,Y=15.09</span><span class="w2">宽=20.00,高=20.00</span><span class="w3"></span>
        <span class="w4"></span><span class="w5">数字</span><span class="w6"></span>
      </div>
      <footer class="taskbar">
        <button class="start"><ui-icon name="start"></ui-icon>开始</button>
        <div class="quick">
          ${["ie", "outlook", "desk", "qq"].map((n) => html`<a href="#" aria-label=${n}><ui-icon name=${n}></ui-icon></a>`)}
          <a class="more" href="#">»</a>
        </div>
        <button class="task"><ui-icon name="ie"></ui-icon>模型工具与DIY机械栏...</button>
        <button class="task pressed"><ui-icon name="screwd"></ui-icon>文泰雕刻2002 - [无...</button>
        <button class="task"><ui-icon name="paint"></ui-icon>9.JPG - 画图</button>
        <div class="kbd"><ui-icon name="keyboard"></ui-icon></div>
        <div class="tray"><ui-icon name="shield"></ui-icon><ui-icon name="net"></ui-icon><ui-icon name="sound"></ui-icon><ui-icon name="umbrella"></ui-icon><time>18:11</time></div>
      </footer>
      <div class="mark"><div>我爱模型 玩家论坛</div><div>5iMX.com</div></div>
    `;
  }
}
